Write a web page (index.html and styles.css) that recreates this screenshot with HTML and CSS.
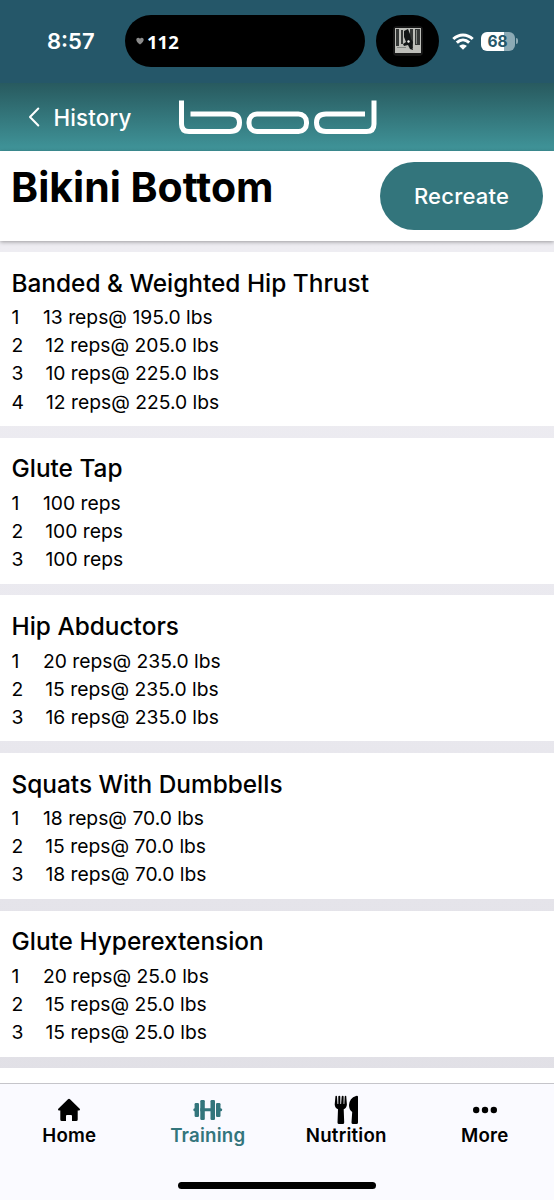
FILE: index.html
```html
<!DOCTYPE html>
<html lang="en">
<head>
    <meta charset="UTF-8">
    <meta name="viewport" content="width=device-width, initial-scale=1.0">
    <title>Bikini Bottom</title>
    <link rel="stylesheet" href="styles.css">
</head>
<body>

<!-- Phone status bar -->
<div class="status-bar">
    <span class="time">8:57</span>
    <div class="island">
        <svg class="heart" width="8" height="8" viewBox="0 0 8 8"><path d="M4 7.5C1.5 5.5 0.3 4.2 0.3 2.7C0.3 0.4 3 0 4 1.8C5 0 7.7 0.4 7.7 2.7C7.7 4.2 6.5 5.5 4 7.5Z" fill="#8b8b8b"/></svg>
        <span class="bpm">112</span>
    </div>
    <div class="island-small">
        <svg width="32" height="32" viewBox="0 0 32 32">
            <rect x="1" y="1" width="30" height="30" rx="4" fill="#171717"/>
            <rect x="3" y="3" width="26" height="25" fill="#bdbeb9"/>
            <path d="M4 4h3v17H4zM9 5h2v14H9zM18 4h3v19h-3zM23 4h5v16h-5z" fill="#353837"/>
            <path d="M12 6l4-2 2 5 1 5 2 3-1 4 1 4-3-1-2-4-4 1-1-2 3-2-2-5z" fill="#121516"/>
            <path d="M24 5h1v14h-1zM5 22h9v1H5z" fill="#858985"/>
            <path d="M16 15l2 1-1 2-2-1z" fill="#f0f0ed"/>
        </svg>
    </div>
    <svg class="wifi" width="22" height="17" viewBox="0 0 22 17">
        <path d="M1.3 6C7 0.500 15 0.500 20.700 6M4.800 9.700C8.500 6.100 13.500 6.100 17.200 9.700" fill="none" stroke="#fff" stroke-width="3"/>
        <path d="M11 16.700L7.200 12.900C9.300 10.900 12.700 10.900 14.800 12.900Z" fill="#fff"/>
    </svg>
    <div class="battery">68</div>
    <span class="battery-tip"></span>
</div>

<!-- Navigation -->
<div class="navbar">
    <svg width="12" height="20" viewBox="0 0 12 20"><path d="M10.3 1.5L2 10L10.3 18.5" fill="none" stroke="#fff" stroke-width="2" stroke-linecap="round" stroke-linejoin="round"/></svg>
    <span class="back">History</span>
    <svg class="logo" width="198" height="35" viewBox="0 0 198 35" role="img" aria-label="bod">
        <g fill="none" stroke="#fff" stroke-width="5">
            <path d="M2.500 0.500V24Q2.500 31.500 10 31.500H51Q60.500 31.500 60.500 22.500Q60.500 14 51 14H11.500"/>
            <rect x="70" y="14" width="57.500" height="17.500" rx="8"/>
            <path d="M195 0.500V24Q195 31.500 187.500 31.500H147Q137.500 31.500 137.500 22.500Q137.500 14 147 14H186"/>
        </g>
    </svg>
</div>

<div class="page-header">
    <h1>Bikini Bottom</h1>
    <button type="button" class="recreate">Recreate</button>
</div>

<!-- Exercises -->
<div class="exercise-list">
    <div class="exercise">
        <h2>Banded &amp; Weighted Hip Thrust</h2>
        <p><span class="set">1</span>13 reps@ 195.0 lbs</p>
        <p><span class="set">2</span>12 reps@ 205.0 lbs</p>
        <p><span class="set">3</span>10 reps@ 225.0 lbs</p>
        <p><span class="set">4</span>12 reps@ 225.0 lbs</p>
    </div>
    <div class="exercise">
        <h2>Glute Tap</h2>
        <p><span class="set">1</span>100 reps</p>
        <p><span class="set">2</span>100 reps</p>
        <p><span class="set">3</span>100 reps</p>
    </div>
    <div class="exercise">
        <h2>Hip Abductors</h2>
        <p><span class="set">1</span>20 reps@ 235.0 lbs</p>
        <p><span class="set">2</span>15 reps@ 235.0 lbs</p>
        <p><span class="set">3</span>16 reps@ 235.0 lbs</p>
    </div>
    <div class="exercise">
        <h2>Squats With Dumbbells</h2>
        <p><span class="set">1</span>18 reps@ 70.0 lbs</p>
        <p><span class="set">2</span>15 reps@ 70.0 lbs</p>
        <p><span class="set">3</span>18 reps@ 70.0 lbs</p>
    </div>
    <div class="exercise">
        <h2>Glute Hyperextension</h2>
        <p><span class="set">1</span>20 reps@ 25.0 lbs</p>
        <p><span class="set">2</span>15 reps@ 25.0 lbs</p>
        <p><span class="set">3</span>15 reps@ 25.0 lbs</p>
    </div>
    <div class="next-exercise"></div>
</div>

<!-- Bottom tabs -->
<div class="tab-bar">
    <div class="tabs">
        <div class="tab">
            <svg width="24" height="28" viewBox="0 0 24 28"><path d="M11 3.300Q12 2.300 13 3.300L22.700 12.700Q23.800 14.300 22 14.500H20.700V23.500Q20.700 25 19.200 25H15V20Q15 19 14 19H10Q9 19 9 20V25H4.800Q3.300 25 3.300 23.500V14.500H2Q0.200 14.300 1.300 12.700Z"/></svg>
            <span>Home</span>
        </div>
        <div class="tab active">
            <svg width="30" height="28" viewBox="0 0 30 28">
                <rect x="0.300" y="12.200" width="28.900" height="3" rx="1.500"/>
                <path class="dumbbell-gap" d="M6 11h1.300v5H6zM22 11h1v5h-1z"/>
                <rect x="1.600" y="7" width="4.400" height="14" rx="1.200"/>
                <rect x="7.300" y="4" width="4.500" height="20" rx="1.200"/>
                <rect x="17.500" y="4" width="4.500" height="20" rx="1.200"/>
                <rect x="23" y="7" width="4.500" height="14" rx="1.200"/>
            </svg>
            <span>Training</span>
        </div>
        <div class="tab">
            <svg width="26" height="30" viewBox="0 0 26 30">
                <path d="M2.500 1Q3.700 0.300 4 1.500L4.500 9H5.300V1.500Q5.400 0.700 6.300 0.700T7.300 1.500V9H8.100L8.700 1.500Q8.900 0.700 9.700 0.700T10.600 1.500V9H11.300L11.700 1.500Q12.100 0.300 13.200 1L13.900 9.500Q13.700 13 10.700 14.300L11.200 27.500Q11.200 29 9.700 29H6Q4.500 29 4.500 27.500L5 14.300Q1.900 13 1.700 9.500Z"/>
                <path d="M25 1.800V27.500Q25 29 23.500 29H20Q18.500 29 18.500 27.500L19.200 17Q16 15 16 10Q16.500 3 23 0.900Q25 0.400 25 1.800Z"/>
            </svg>
            <span>Nutrition</span>
        </div>
        <div class="tab">
            <svg width="26" height="28" viewBox="0 0 26 28"><circle cx="4.200" cy="14" r="3.200"/><circle cx="13" cy="14" r="3.200"/><circle cx="21.800" cy="14" r="3.200"/></svg>
            <span>More</span>
        </div>
    </div>
    <div class="home-indicator"></div>
</div>

</body>
</html>
```
FILE: styles.css
```css
* {
    box-sizing: border-box;
}
body {
    margin: 0;
    width: 554px;
    height: 1200px;
    overflow: hidden;
    display: flex;
    flex-direction: column;
    font-family: Inter, "Liberation Sans", sans-serif;
    color: #000;
    background-color: #fff;
}
svg {
    flex: none;
}

/* Status bar */
.status-bar {
    height: 83px;
    flex: none;
    display: flex;
    align-items: center;
    padding-bottom: 1px;
    background-color: #255769;
    color: #fff;
}
.time {
    width: 78px;
    margin-left: 47px;
    font-size: 22px;
    font-weight: 600;
}
.island {
    width: 240px;
    height: 52px;
    border-radius: 26px;
    background-color: #000;
    display: flex;
    align-items: center;
    padding-left: 11px;
}
.bpm {
    margin-left: 3px;
    font-family: "Noto Sans", sans-serif;
    font-size: 18.500px;
    font-weight: 700;
}
.island-small {
    width: 63px;
    height: 52px;
    margin-left: 11px;
    border-radius: 26px;
    background-color: #000;
    display: flex;
    align-items: center;
    justify-content: center;
}
.wifi {
    margin-left: 13px;
}
.battery {
    width: 34px;
    height: 19px;
    margin-left: 7px;
    padding-right: 1px;
    border-radius: 6px;
    background: linear-gradient(to right, #fff 68%, #8caab5 68%);
    color: #255769;
    font-size: 15.500px;
    font-weight: 700;
    line-height: 19px;
    text-align: center;
}
.battery-tip {
    width: 2px;
    height: 6px;
    margin-left: 1px;
    border-radius: 0 2px 2px 0;
    background-color: #8caab5;
}

/* Navigation */
.navbar {
    height: 68px;
    flex: none;
    display: flex;
    align-items: center;
    padding-left: 28px;
    background: linear-gradient(#285a5f, #2f6b70 30%, #40959a);
    color: #fff;
}
.back {
    width: 125px;
    margin-left: 13.500px;
    padding-top: 1px;
    font-size: 22.300px;
    font-weight: 500;
    letter-spacing: 0.15px;
}

/* Page title */
.page-header {
    position: relative;
    z-index: 1;
    height: 90px;
    flex: none;
    display: flex;
    justify-content: space-between;
    padding: 11px 11px 0 11px;
    background-color: #fff;
    box-shadow: 0 1px 4px rgba(0, 0, 0, 0.35);
}
h1 {
    margin: 0;
    font-size: 41px;
    font-weight: 700;
    line-height: 51px;
}
.recreate {
    width: 163px;
    height: 68px;
    border: none;
    border-radius: 34px;
    background-color: #33757c;
    color: #fff;
    font-family: inherit;
    font-size: 22px;
    font-weight: 500;
    letter-spacing: 0.2px;
}

/* Exercises */
.exercise-list {
    height: 842px;
    flex: none;
    overflow: hidden;
    display: flex;
    flex-direction: column;
    gap: 11.700px;
    padding-top: 11px;
    background: linear-gradient(#eeedf2, #eae9ef 50%, #e1e0e6);
}
.exercise {
    flex: none;
    padding: 13.600px 12px 10.400px 11.500px;
    background-color: #fff;
}
h2 {
    margin: 0 0 3.500px;
    font-size: 24.400px;
    font-weight: 450;
    line-height: 34px;
}
.exercise p {
    margin: 0;
    font-size: 19.300px;
    line-height: 28.150px;
}
.set {
    display: inline-block;
    min-width: 9.500px;
    margin-right: 22px;
}
.next-exercise {
    flex: 1;
    background-color: #fff;
}

/* Bottom tabs */
.tab-bar {
    flex: 1;
    border-top: 1px solid #c5c5ca;
    background-color: #fafaff;
}
.tabs {
    display: flex;
    padding-top: 11px;
}
.tab {
    width: 25%;
    display: flex;
    flex-direction: column;
    align-items: center;
    font-size: 18.700px;
    font-weight: 600;
    letter-spacing: 0.2px;
}
.tab svg {
    height: 30px;
}
.tab span {
    line-height: 22px;
}
.tab.active {
    color: #33757c;
    fill: #33757c;
}
.dumbbell-gap {
    fill: #fafaff;
}
.home-indicator {
    width: 198px;
    height: 7px;
    margin: 35px auto 0;
    border-radius: 4px;
    background-color: #000;
}
```
